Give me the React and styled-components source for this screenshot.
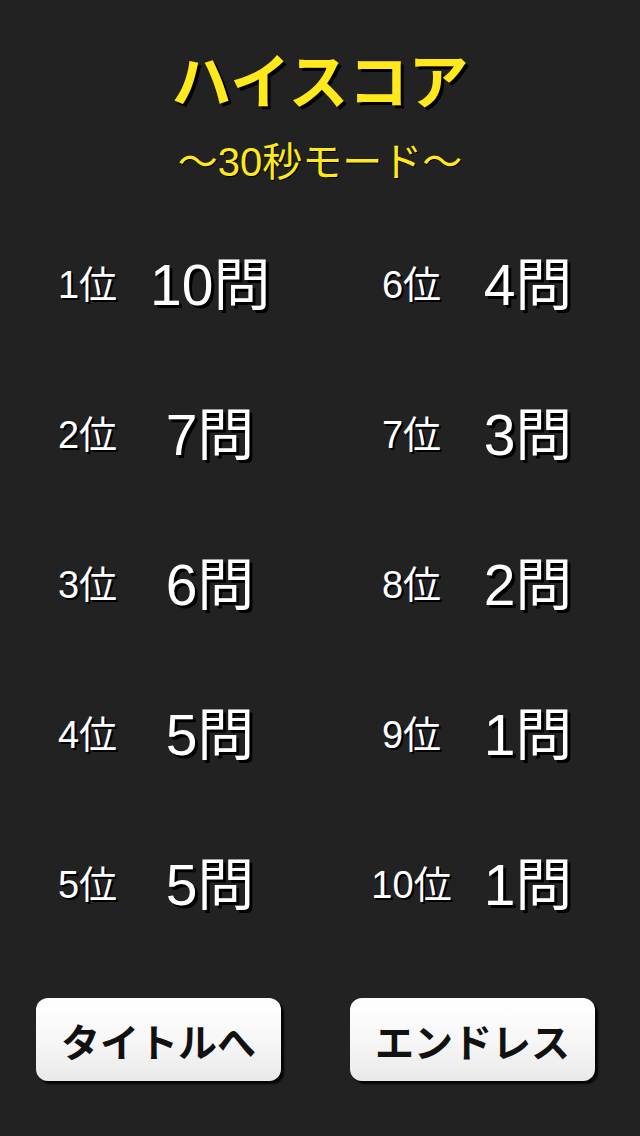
import React from "react";
import styled, { createGlobalStyle } from "styled-components";

const GlobalStyle = createGlobalStyle`
  html, body {
    margin: 0;
    padding: 0;
    background: #222222;
  }
  body {
    font-family: "Liberation Sans", "Noto Sans CJK JP", sans-serif;
  }
`;

const Screen = styled.div`
  width: 640px;
  height: 1136px;
  background: #222222;
  display: flex;
  flex-direction: column;
  align-items: center;
  overflow: hidden;
`;

const Title = styled.h1`
  margin: 48px 0 0;
  font-family: "Noto Sans CJK JP", sans-serif;
  font-weight: 700;
  font-size: 60px;
  line-height: 1;
  color: #ffe81c;
  text-shadow: 3px 3px 0 #000;
`;

const Subtitle = styled.div`
  margin-top: 34px;
  font-family: "Liberation Sans", "Noto Sans CJK JP", sans-serif;
  font-size: 40px;
  line-height: 1;
  color: #ffe81c;
  text-shadow: 1px 1px 0 #000;
`;

const Board = styled.div`
  margin-top: 28px;
  width: 640px;
  display: grid;
  grid-template-columns: 320px 320px;
  grid-auto-flow: column;
  grid-template-rows: repeat(5, 150px);
`;

const Entry = styled.div`
  display: flex;
  align-items: center;
  padding-left: ${(p) => (p.$right ? 44 : 40)}px;
  gap: ${(p) => (p.$right ? 9 : 15)}px;
`;

const Rank = styled.div`
  width: 95px;
  text-align: center;
  font-size: 38px;
  line-height: 1;
  color: #fff;
  text-shadow: 2px 2px 0 #000;
  white-space: nowrap;
`;

const Score = styled.div`
  width: 120px;
  text-align: center;
  font-size: 57px;
  line-height: 1;
  color: #fff;
  text-shadow: 3px 3px 0 #000;
  white-space: nowrap;
`;

const Buttons = styled.div`
  margin-top: 38px;
  width: 640px;
  box-sizing: border-box;
  padding-left: 36px;
  display: flex;
  gap: 69px;
`;

const Button = styled.button`
  width: 245px;
  height: 83px;
  border: none;
  border-radius: 12px;
  background: linear-gradient(180deg, #ffffff 0%, #f7f7f7 50%, #e9e9e9 100%);
  box-shadow: 3px 3px 2px rgba(0, 0, 0, 0.85);
  font-family: "Noto Sans CJK JP", sans-serif;
  font-weight: 700;
  font-size: 39px;
  color: #111;
  padding: 0;
  cursor: pointer;
`;

const scores = [
  { rank: "1位", score: "10問" },
  { rank: "2位", score: "7問" },
  { rank: "3位", score: "6問" },
  { rank: "4位", score: "5問" },
  { rank: "5位", score: "5問" },
  { rank: "6位", score: "4問" },
  { rank: "7位", score: "3問" },
  { rank: "8位", score: "2問" },
  { rank: "9位", score: "1問" },
  { rank: "10位", score: "1問" },
];

const App = () => {
  return (
    <Screen>
      <GlobalStyle />
      <Title>ハイスコア</Title>
      <Subtitle>〜30秒モード〜</Subtitle>
      <Board>
        {scores.map((item, i) => (
          <Entry key={item.rank} $right={i >= 5}>
            <Rank>{item.rank}</Rank>
            <Score>{item.score}</Score>
          </Entry>
        ))}
      </Board>
      <Buttons>
        <Button>タイトルへ</Button>
        <Button>エンドレス</Button>
      </Buttons>
    </Screen>
  );
};

export default App;
